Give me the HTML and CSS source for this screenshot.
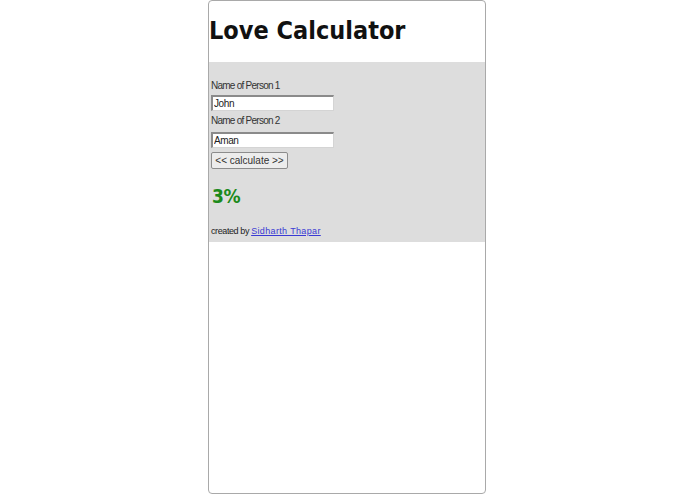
FILE: index.html
```html
<!DOCTYPE html>
<html>
<head>
<meta charset="utf-8">
<title>Love Calculator</title>
<link rel="stylesheet" href="styles.css">
</head>
<body>
<div class="frame">
  <h1 class="title">Love Calculator</h1>
  <div class="panel">
    <p class="label">Name of Person 1</p>
    <input class="field field-first" type="text" value="John">
    <p class="label">Name of Person 2</p>
    <input class="field field-second" type="text" value="Aman">
    <button class="calc" type="button">&lt;&lt; calculate &gt;&gt;</button>
    <div class="result">3%</div>
    <p class="credit">created by <a class="credit-link" href="#">Sidharth Thapar</a></p>
  </div>
</div>
</body>
</html>
```

FILE: styles.css
```css
html, body {
  margin: 0;
  padding: 0;
  background: #ffffff;
}

.frame {
  box-sizing: border-box;
  width: 278px;
  height: 494px;
  margin: 0 0 0 208px;
  border: 1px solid #a9a9a9;
  border-radius: 4px;
  background: #ffffff;
  overflow: hidden;
}

.title {
  box-sizing: border-box;
  height: 61px;
  margin: 0;
  padding: 16px 0 0 0;
  font-family: "DejaVu Sans", sans-serif;
  font-stretch: condensed;
  font-weight: bold;
  font-size: 25px;
  line-height: 28px;
  letter-spacing: 0;
  color: #111111;
}

.panel {
  box-sizing: border-box;
  height: 180px;
  background: #dddddd;
  padding: 17px 2px 0 2px;
  font-family: "Liberation Sans", Arial, sans-serif;
}

.label {
  margin: 0;
  font-size: 10px;
  line-height: 14px;
  letter-spacing: -0.75px;
  color: #333333;
}

.field {
  display: block;
  box-sizing: border-box;
  width: 123px;
  height: 16px;
  margin: 2px 0 3px 0;
  padding: 0 1px;
  border: 1px solid #d4d4d4;
  border-top: 2px solid #8a8a8a;
  border-left: 2px solid #8a8a8a;
  background: #ffffff;
  font-family: "Liberation Sans", Arial, sans-serif;
  font-size: 10px;
  letter-spacing: -0.4px;
  color: #222222;
  outline: none;
}

.field-second {
  margin-top: 4px;
}

.calc {
  display: block;
  box-sizing: border-box;
  width: 77px;
  height: 17px;
  margin: 4px 0 0 0;
  padding: 0;
  border: 1px solid #8c8c8c;
  border-radius: 2px;
  background: #ececec;
  font-family: "Liberation Sans", Arial, sans-serif;
  font-size: 10px;
  line-height: 15px;
  letter-spacing: 0;
  color: #333333;
}

.result {
  margin: 15px 0 0 1px;
  font-family: "DejaVu Sans", sans-serif;
  font-stretch: condensed;
  font-weight: bold;
  font-size: 19px;
  line-height: 24px;
  letter-spacing: -0.5px;
  color: #1b8a1b;
}

.credit {
  margin: 17px 0 0 0;
  font-size: 9px;
  line-height: 12px;
  letter-spacing: -0.4px;
  color: #222222;
}

.credit-link {
  color: #3a3ad4;
  text-decoration: underline;
  letter-spacing: 0.35px;
}
```
